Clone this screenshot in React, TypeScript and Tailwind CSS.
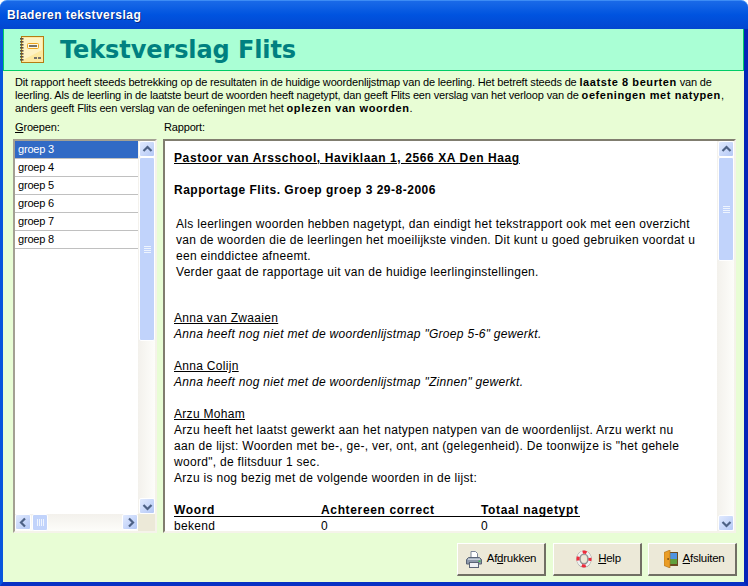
import type { ReactNode } from 'react';

const ui = "[font-family:'Liberation_Sans',Arial,sans-serif]";
const heavy = "[font-family:'DejaVu_Sans',Verdana,sans-serif]";

const groups = ['groep 3', 'groep 4', 'groep 5', 'groep 6', 'groep 7', 'groep 8'];

function Arrow({ dir }: { dir: 'up' | 'down' | 'left' | 'right' }) {
  const d = {
    up: 'M2.5 8 L6.5 4 L10.5 8',
    down: 'M2.5 5 L6.5 9 L10.5 5',
    left: 'M8 2.5 L4 6.5 L8 10.5',
    right: 'M5 2.5 L9 6.5 L5 10.5',
  }[dir];
  return (
    <svg width="13" height="13" viewBox="0 0 13 13" fill="none">
      <path d={d} stroke="#4d6185" strokeWidth="2.2" />
    </svg>
  );
}

function ScrollButton({ dir }: { dir: 'up' | 'down' | 'left' | 'right' }) {
  return (
    <div className="w-[16px] h-[16px] shrink-0 flex items-center justify-center rounded-[2px] border border-white bg-gradient-to-br from-[#e1eafe] to-[#b4c8f6]">
      <Arrow dir={dir} />
    </div>
  );
}

function Grip({ vertical }: { vertical: boolean }) {
  return (
    <div className={vertical ? 'flex flex-col gap-[1px]' : 'flex gap-[1px]'}>
      {[0, 1, 2, 3].map((i) => (
        <div key={i} className={vertical ? 'w-[7px] h-[1px] bg-[#eef4fe]' : 'w-[1px] h-[7px] bg-[#eef4fe]'} />
      ))}
    </div>
  );
}

function VScroll({ thumbHeight }: { thumbHeight: string }) {
  return (
    <div className="w-[17px] shrink-0 flex flex-col bg-gradient-to-r from-[#f3f1ec] to-[#fdfdfa] pl-[1px]">
      <ScrollButton dir="up" />
      <div className={`${thumbHeight} w-[16px] flex items-center justify-center rounded-[2px] border border-white bg-[#c1d3fb]`}>
        <Grip vertical />
      </div>
      <div className="flex-1" />
      <ScrollButton dir="down" />
    </div>
  );
}

function Notebook() {
  return (
    <svg width="24" height="27" viewBox="0 0 24 27">
      <rect x="1.5" y="0.5" width="22" height="26" fill="#fde9a0" stroke="#b47c14" />
      <path d="M3 2h19v12L3 24z" fill="#fef3c4" />
      <rect x="7.5" y="7.5" width="11" height="5" rx="1" fill="#fff8e0" stroke="#eda51e" />
      <rect x="9" y="9" width="8" height="2" fill="#77736a" />
      <rect x="14" y="21" width="3" height="2" fill="#77736a" />
      <rect x="18" y="21" width="3" height="2" fill="#77736a" />
      {[2, 5, 8, 11, 14, 17, 20, 23].map((y) => (
        <rect key={y} x="0" y={y} width="3.5" height="1.6" fill="#5d5140" />
      ))}
    </svg>
  );
}

function PrinterIcon() {
  return (
    <svg width="16" height="17" viewBox="0 0 16 17">
      <path d="M5 .5h4.5l2 2V7H5z" fill="#fff" stroke="#7c8699" />
      <path d="M.5 8.5 2.5 6.5h11l2 2v4.5H.5z" fill="#8d98ab" stroke="#5a6476" />
      <rect x="2" y="7.5" width="12" height="1.5" fill="#c6ced9" />
      <rect x="12.5" y="9.5" width="2" height="1.5" fill="#3fbf4a" />
      <rect x="3.5" y="11.5" width="9" height="5" fill="#eef0f4" stroke="#5a6476" />
    </svg>
  );
}

function HelpIcon() {
  return (
    <svg width="16" height="18" viewBox="0 0 16 18" fill="none">
      <ellipse cx="8" cy="9" rx="7.6" ry="8.6" fill="#7f8184" />
      <ellipse cx="8" cy="9" rx="6" ry="6.9" stroke="#f1f1f1" strokeWidth="2.6" />
      <ellipse cx="8" cy="9" rx="6" ry="6.9" stroke="#ee2c3c" strokeWidth="3" strokeDasharray="4 6.2" strokeDashoffset="2" />
      <ellipse cx="8" cy="9" rx="3.6" ry="4.4" fill="#ece9d8" stroke="#8f9194" strokeWidth="0.7" />
    </svg>
  );
}

function DoorIcon() {
  return (
    <svg width="14" height="18" viewBox="0 0 14 18">
      <rect x="3" y="2" width="11" height="14" fill="#6b4a20" />
      <rect x="6" y="3" width="7" height="6" fill="#4f94e2" />
      <rect x="6" y="9" width="7" height="5" fill="#5f9f3c" />
      <path d="M0 2.5 L6 0 V18 L0 15.5 Z" fill="#ea9d26" stroke="#a86c14" strokeWidth="0.6" />
      <rect x="3.5" y="8" width="1.2" height="2" fill="#6b4310" />
    </svg>
  );
}

function FooterButton({ icon, children, className }: { icon: ReactNode; children: ReactNode; className: string }) {
  return (
    <div className={`w-[89px] h-[33px] flex items-center justify-center ${className} bg-[#ece9d8] border-t border-l border-t-white border-l-white border-r-2 border-b-2 border-r-[#716f64] border-b-[#716f64] text-[11.5px] tracking-[-0.25px] text-black`}>
      {icon}
      <span>{children}</span>
    </div>
  );
}

function Line({ children, className = '' }: { children?: ReactNode; className?: string }) {
  return <div className={`h-[16px] leading-[16px] whitespace-nowrap ${className}`}>{children}</div>;
}

const tableBold = 'font-bold tracking-[0.65px]';

export default function App() {
  return (
    <div className={`w-[748px] h-[586px] flex flex-col overflow-hidden bg-white ${ui}`}>
      <div className="h-[29px] shrink-0 flex items-center pl-[7px] rounded-t-[7px] bg-gradient-to-b from-[#1a6ae8] via-[#0053df] to-[#0347d0] border-t border-t-[#3d8cf5]">
        <span className="text-white font-bold text-[12px] [text-shadow:1px_1px_0_#0a2a80] tracking-[0.45px]">Bladeren tekstverslag</span>
      </div>

      <div className="flex-1 min-h-0 flex flex-col bg-[#e8fdd5] border-l-[3px] border-l-[#0855dd] border-r-[4px] border-r-[#0326b8] border-b-[4px] border-b-[#0831c4]">
        <div className="h-[42px] shrink-0 flex items-center bg-[#aaffd5] border-b border-b-[#00cc66] border-r border-r-[#00cc66] border-l border-l-[#00cc66] pl-[16px]">
          <Notebook />
          <span className={`ml-[16px] text-[24px] tracking-[-0.1px] font-bold text-[#008080] ${heavy}`}>Tekstverslag Flits</span>
        </div>

        <div className="pl-[12px] pt-[5px] text-[11px] leading-[13px] text-black whitespace-nowrap tracking-[-0.16px]">
          <div>Dit rapport heeft steeds betrekking op de resultaten in de huidige woordenlijstmap van de leerling. Het betreft steeds de <b className="tracking-[0.58px]">laatste 8 beurten</b> van de</div>
          <div>leerling. Als de leerling in de laatste beurt de woorden heeft nagetypt, dan geeft Flits een verslag van het verloop van de <b className="tracking-[0.58px]">oefeningen met natypen</b>,</div>
          <div>anders geeft Flits een verslag van de oefeningen met het <b className="tracking-[0.58px]">oplezen van woorden</b>.</div>
        </div>

        <div className="flex pl-[12px] pt-[6px] h-[24px] shrink-0 text-[11px] leading-[13px] text-black tracking-[-0.16px]">
          <div className="w-[149px]"><u>G</u>roepen:</div>
          <div>Rapport:</div>
        </div>

        <div className="flex gap-[6px] pl-[10px] pr-[8px] h-[394px] shrink-0">
          <div className="w-[144px] flex flex-col border-2 border-t-[#a3a093] border-l-[#a3a093] border-r-[#f5f3ea] border-b-[#f5f3ea] bg-white">
            <div className="flex-1 min-h-0 flex">
              <div className="flex-1 text-[11px] tracking-[-0.2px]">
                {groups.map((g, i) => (
                  <div key={g} className={`h-[18px] leading-[17px] pl-[3px] border-b border-b-[#c0c0c0] ${i === 0 ? 'bg-[#316ac5] text-white' : 'text-black'}`}>{g}</div>
                ))}
              </div>
              <VScroll thumbHeight="h-[184px]" />
            </div>
            <div className="h-[17px] shrink-0 flex bg-gradient-to-b from-[#f3f1ec] to-[#fdfdfa]">
              <ScrollButton dir="left" />
              <div className="w-[16px] ml-[1px] flex items-center justify-center rounded-[2px] border border-white bg-[#c1d3fb]">
                <Grip vertical={false} />
              </div>
              <div className="flex-1" />
              <ScrollButton dir="right" />
              <div className="w-[17px] bg-[#ece9d8]" />
            </div>
          </div>

          <div className="flex-1 min-w-0 flex border-2 border-t-[#807d6f] border-l-[#807d6f] border-r-[#f5f3ea] border-b-[#f5f3ea] bg-white">
            <div className="flex-1 min-w-0 pl-[9px] pt-[9px] text-[12px] text-black tracking-[0.3px]">
              <Line className="font-bold tracking-[0.6px] underline">Pastoor van Arsschool, Haviklaan 1, 2566 XA Den Haag</Line>
              <div className="h-[16px]" />
              <Line className="font-bold tracking-[0.5px]">Rapportage Flits. Groep groep 3 29-8-2006</Line>
              <div className="h-[18px]" />
              <div className="pl-[2px]">
                <Line>Als leerlingen woorden hebben nagetypt, dan eindigt het tekstrapport ook met een overzicht</Line>
                <Line>van de woorden die de leerlingen het moeilijkste vinden. Dit kunt u goed gebruiken voordat u</Line>
                <Line>een einddictee afneemt.</Line>
                <Line>Verder gaat de rapportage uit van de huidige leerlinginstellingen.</Line>
              </div>
              <div className="h-[30px]" />
              <Line className="underline">Anna van Zwaaien</Line>
              <Line className="italic">Anna heeft nog niet met de woordenlijstmap "Groep 5-6" gewerkt.</Line>
              <div className="h-[16px]" />
              <Line className="underline">Anna Colijn</Line>
              <Line className="italic">Anna heeft nog niet met de woordenlijstmap "Zinnen" gewerkt.</Line>
              <div className="h-[16px]" />
              <Line className="underline">Arzu Moham</Line>
              <Line>Arzu heeft het laatst gewerkt aan het natypen natypen van de woordenlijst. Arzu werkt nu</Line>
              <Line>aan de lijst: Woorden met be-, ge-, ver, ont, ant (gelegenheid). De toonwijze is "het gehele</Line>
              <Line>woord", de flitsduur 1 sec.</Line>
              <Line>Arzu is nog bezig met de volgende woorden in de lijst:</Line>
              <div className="h-[16px]" />
              <div className={`grid grid-cols-[147px_160px_99px] w-[406px] h-[15px] leading-[16px] border-b border-b-black ${tableBold}`}>
                <div>Woord</div>
                <div>Achtereen correct</div>
                <div className="whitespace-nowrap">Totaal nagetypt</div>
              </div>
              <div className="grid grid-cols-[147px_160px_99px] w-[406px] h-[14px] leading-[18px]">
                <div>bekend</div>
                <div>0</div>
                <div>0</div>
              </div>
            </div>
            <VScroll thumbHeight="h-[104px]" />
          </div>
        </div>

        <div className="flex-1 flex justify-end items-start gap-[6px] pt-[10px] pr-[7px]">
          <FooterButton icon={<PrinterIcon />} className="gap-[5px] mr-[1px] -translate-x-0">
            <>Af<u>d</u>rukken</>
          </FooterButton>
          <FooterButton icon={<HelpIcon />} className="gap-[6px] pl-[3px]">
            <><u>H</u>elp</>
          </FooterButton>
          <FooterButton icon={<DoorIcon />} className="gap-[5px] pl-[4px]">
            <><u>A</u>fsluiten</>
          </FooterButton>
        </div>
      </div>
    </div>
  );
}
